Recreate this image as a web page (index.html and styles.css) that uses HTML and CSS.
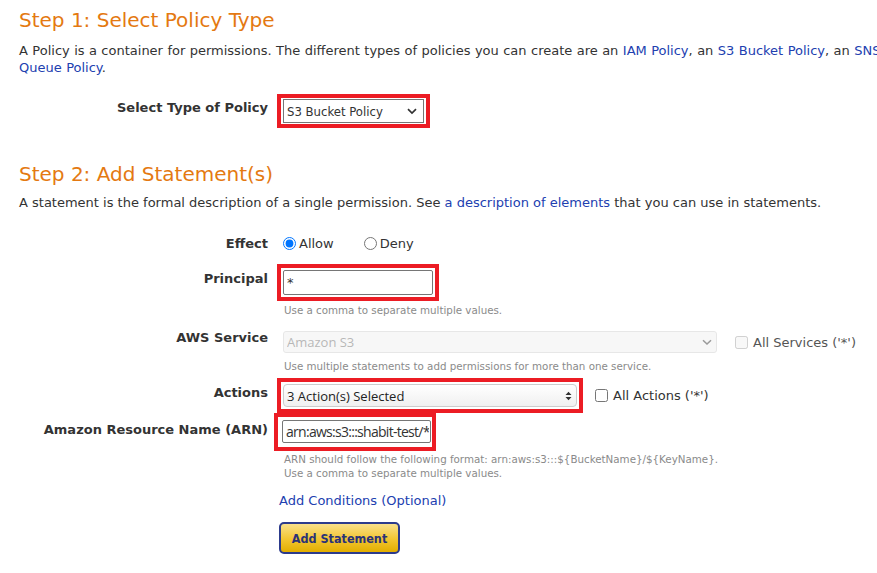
FILE: index.html
```html
<!DOCTYPE html>
<html>
<head>
<meta charset="utf-8">
<link rel="stylesheet" href="styles.css">
</head>
<body>
<div class="page">
  <h1 class="step first">Step 1: Select Policy Type</h1>
  <p class="intro intro1">A Policy is a container for permissions. The different types of policies you can create are an <a href="#">IAM Policy</a>, an <a href="#">S3 Bucket Policy</a>, an <a href="#">SNS Topic Policy</a>, a <a href="#">VPC Endpoint Policy</a>, and an <a href="#">SQS<br>Queue Policy</a>.</p>

  <div class="row row-policy">
    <div class="label lbl-policy">Select Type of Policy</div>
    <div class="ctrl">
      <div class="hl hl-policy">
        <span class="selwrap">
          <select class="sel sel-policy"><option>S3 Bucket Policy</option></select>
          <svg class="chev" width="10" height="7" viewBox="0 0 10 7"><path d="M1 1.2 L5 5 L9 1.2" fill="none" stroke="#333" stroke-width="1.7"/></svg>
        </span>
      </div>
    </div>
  </div>

  <h1 class="step second">Step 2: Add Statement(s)</h1>
  <p class="intro intro2">A statement is the formal description of a single permission. See <a href="#">a description of elements</a> that you can use in statements.</p>

  <div class="row row-effect">
    <div class="label">Effect</div>
    <div class="ctrl radios">
      <label class="radio"><input type="radio" name="effect" checked> Allow</label>
      <label class="radio deny"><input type="radio" name="effect"> Deny</label>
    </div>
  </div>

  <div class="row row-principal">
    <div class="label lbl-principal">Principal</div>
    <div class="ctrl">
      <div class="hl hl-principal"><input class="txt txt-principal" type="text" value="*"></div>
      <div class="help help1">Use a comma to separate multiple values.</div>
    </div>
  </div>

  <div class="row row-service">
    <div class="label lbl-service">AWS Service</div>
    <div class="ctrl">
      <div class="inline">
        <span class="selwrap">
          <select class="sel sel-service" disabled><option>Amazon S3</option></select>
          <svg class="chev chev-service" width="10" height="7" viewBox="0 0 10 7"><path d="M1 1.2 L5 5 L9 1.2" fill="none" stroke="#9a9a9a" stroke-width="1.5"/></svg>
        </span>
        <label class="check check-services"><input type="checkbox" disabled> All Services ('*')</label>
      </div>
      <div class="help help2">Use multiple statements to add permissions for more than one service.</div>
    </div>
  </div>

  <div class="row row-actions">
    <div class="label lbl-actions">Actions</div>
    <div class="ctrl">
      <div class="inline">
        <div class="hl hl-actions">
          <span class="selwrap">
            <select class="sel sel-actions"><option>3 Action(s) Selected</option></select>
            <svg class="updown" width="7" height="10" viewBox="0 0 7 10"><path d="M0.5 4 L3.5 0.8 L6.5 4 Z M0.5 6 L3.5 9.2 L6.5 6 Z" fill="#333"/></svg>
          </span>
        </div>
        <label class="check check-actions"><input type="checkbox"> All Actions ('*')</label>
      </div>
    </div>
  </div>

  <div class="row row-arn">
    <div class="label lbl-arn">Amazon Resource Name (ARN)</div>
    <div class="ctrl">
      <div class="hl hl-arn"><input class="txt txt-arn" type="text" value="arn:aws:s3:::shabit-test/*"></div>
      <div class="help help3">ARN should follow the following format: arn:aws:s3:::${BucketName}/${KeyName}.<br>Use a comma to separate multiple values.</div>
      <div class="conds"><a href="#">Add Conditions (Optional)</a></div>
      <button class="btn" type="button">Add Statement</button>
    </div>
  </div>
</div>
</body>
</html>
```

FILE: styles.css
```css
html, body {
  margin: 0;
  padding: 0;
  background: #ffffff;
}
body {
  font-family: "DejaVu Sans", sans-serif;
  font-size: 13px;
  color: #333333;
  overflow: hidden;
}
.page {
  padding-left: 19px;
  width: 1300px;
}
a {
  color: #2140b0;
  text-decoration: none;
}
.step {
  font-size: 20px;
  line-height: 24px;
  font-weight: normal;
  color: #e47911;
  margin: 0;
}
.step.first { margin-top: 8px; }
.step.second { margin-top: 34px; }
.intro {
  margin: 10px 0 0;
  line-height: 17px;
}
.intro1 {
  white-space: nowrap;
  word-spacing: 0.3px;
}
.intro2 { margin-top: 8px; }

.row {
  display: flex;
  align-items: flex-start;
}
.label {
  width: 249px;
  margin-right: 9px;
  text-align: right;
  font-weight: bold;
  line-height: 17px;
  color: #333;
  flex: none;
}
.ctrl {
  display: flex;
  flex-direction: column;
  align-items: flex-start;
}
.hl {
  border: 4px solid #ec1c24;
  padding: 1px 2px;
}
.row-policy { margin-top: 18px; }
.lbl-policy { padding-top: 5px; }

.selwrap {
  position: relative;
  display: inline-block;
}
.sel {
  -webkit-appearance: none;
  appearance: none;
  font-family: inherit;
  font-size: 13px;
  margin: 0;
  display: block;
  box-sizing: border-box;
}
.sel-policy {
  width: 141px;
  height: 24px;
  border: 1px solid #767676;
  border-radius: 0;
  background: #fff;
  color: #333;
  padding: 0 0 0 3px;
  font-family: "DejaVu Sans Condensed", "DejaVu Sans", sans-serif;
  font-stretch: condensed;
}
.chev {
  position: absolute;
  right: 7px;
  top: 9px;
}
.row-effect { margin-top: 24px; }
.radios {
  flex-direction: row;
  align-items: center;
  height: 17px;
  padding-left: 6px;
}
.radio {
  display: flex;
  align-items: center;
  line-height: 17px;
}
.radio input {
  width: 13px;
  height: 13px;
  margin: 0 3px 0 0;
}
.radio.deny { margin-left: 30px; }

.row-principal { margin-top: 12px; }
.lbl-principal { padding-top: 6px; }
.hl-principal { padding: 2px; }
.txt {
  box-sizing: border-box;
  margin: 0;
  border: 1px solid #767676;
  border-radius: 2px;
  display: block;
  color: #333;
  background: #fff;
}
.txt-principal {
  width: 150px;
  height: 25px;
  padding: 0 3px;
  font-family: inherit;
  font-size: 13px;
}
.help {
  font-size: 10.3px;
  line-height: 14px;
  color: #8a8a8a;
  padding-left: 7px;
}
.help1 { margin-top: 2px; }

.row-service { margin-top: 14px; }
.lbl-service { margin-top: -2px; }
.inline {
  display: flex;
  align-items: center;
}
.row-service .inline { padding-left: 6px; }
.sel-service {
  width: 434px;
  height: 22px;
  border: 1px solid #dddddd;
  border-radius: 3px;
  background: #f5f5f5;
  color: #9a9a9a;
  padding: 0 0 0 3px;
  font-family: "Open Sans", sans-serif;
}
.chev-service {
  right: 5px;
  top: 8px;
}
.check {
  display: flex;
  align-items: center;
  line-height: 17px;
}
.check input {
  width: 13px;
  height: 13px;
  margin: 0 5px 0 0;
}
.check-services {
  margin-left: 18px;
  color: #555;
}
.help2 { margin-top: 6px; }

.row-actions { margin-top: 5px; }
.lbl-actions { padding-top: 6px; }
.hl-actions { padding: 2px; }
.sel-actions {
  width: 294px;
  height: 23px;
  border: 1px solid #cccccc;
  border-radius: 4px;
  background: linear-gradient(#ffffff, #f0f0f0);
  color: #222;
  padding: 0 0 0 3px;
  font-family: "Open Sans", sans-serif;
  font-size: 13px;
}
.updown {
  position: absolute;
  right: 5px;
  top: 7px;
}
.check-actions {
  margin-left: 12px;
  color: #333;
}

.row-arn { margin-top: 0; }
.lbl-arn { padding-top: 8px; }
.hl-arn {
  margin-left: -3px;
  padding: 3px 1px 4px 4px;
}
.txt-arn {
  width: 149px;
  height: 23px;
  padding: 0 1px 0 3px;
  font-family: "Open Sans", sans-serif;
  font-size: 14px;
  letter-spacing: -0.72px;
}
.help3 { margin-top: 1px; }
.conds {
  margin-top: 12px;
  padding-left: 2px;
  line-height: 17px;
}
.btn {
  margin: 13px 0 0 2px;
  width: 121px;
  height: 32px;
  border: 2px solid #2c3b8c;
  border-radius: 5px;
  background: linear-gradient(#f9e08a, #f2c530 55%, #e2ae00);
  color: #2a3278;
  font-family: "DejaVu Sans Condensed", "DejaVu Sans", sans-serif;
  font-stretch: condensed;
  font-size: 12.5px;
  font-weight: bold;
  padding: 0;
  box-sizing: border-box;
}
```
